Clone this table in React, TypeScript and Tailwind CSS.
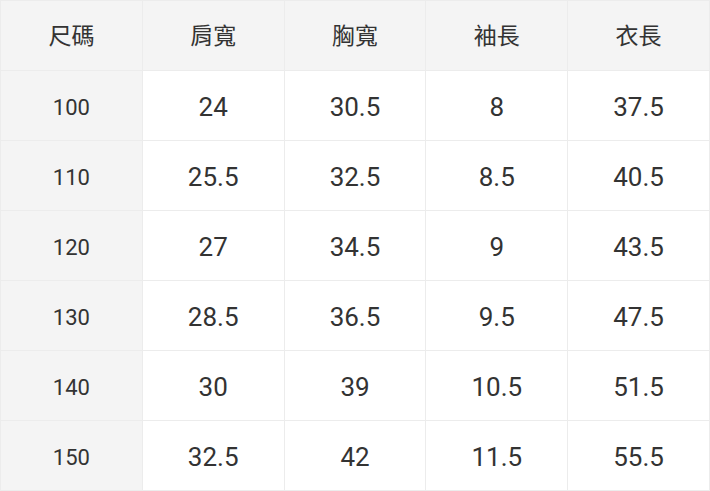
const headers = ["尺碼", "肩寬", "胸寬", "袖長", "衣長"];

const rows = [
  ["100", "24", "30.5", "8", "37.5"],
  ["110", "25.5", "32.5", "8.5", "40.5"],
  ["120", "27", "34.5", "9", "43.5"],
  ["130", "28.5", "36.5", "9.5", "47.5"],
  ["140", "30", "39", "10.5", "51.5"],
  ["150", "32.5", "42", "11.5", "55.5"],
];

const App = () => {
  return (
    <div className="h-[491px] w-[710px] bg-white font-['Roboto','Noto_Sans_CJK_TC',sans-serif] text-[#333]">
      <div className="grid grid-cols-5 border-l border-t border-[#ececec]">
        {headers.map((h) => (
          <div
            key={h}
            className="flex h-[70px] items-center justify-center border-b border-r border-[#ececec] bg-[#f4f4f4] pt-1 text-[23px]"
          >
            {h}
          </div>
        ))}
        {rows.map((row) =>
          row.map((cell, i) => (
            <div
              key={row[0] + "-" + i}
              className={
                i === 0
                  ? "flex h-[70px] items-center justify-center border-b border-r border-[#ececec] bg-[#f4f4f4] pt-1 text-[22px]"
                  : "flex h-[70px] items-center justify-center border-b border-r border-[#ececec] pt-1 text-[26px]"
              }
            >
              {cell}
            </div>
          ))
        )}
      </div>
    </div>
  );
};

export default App;
